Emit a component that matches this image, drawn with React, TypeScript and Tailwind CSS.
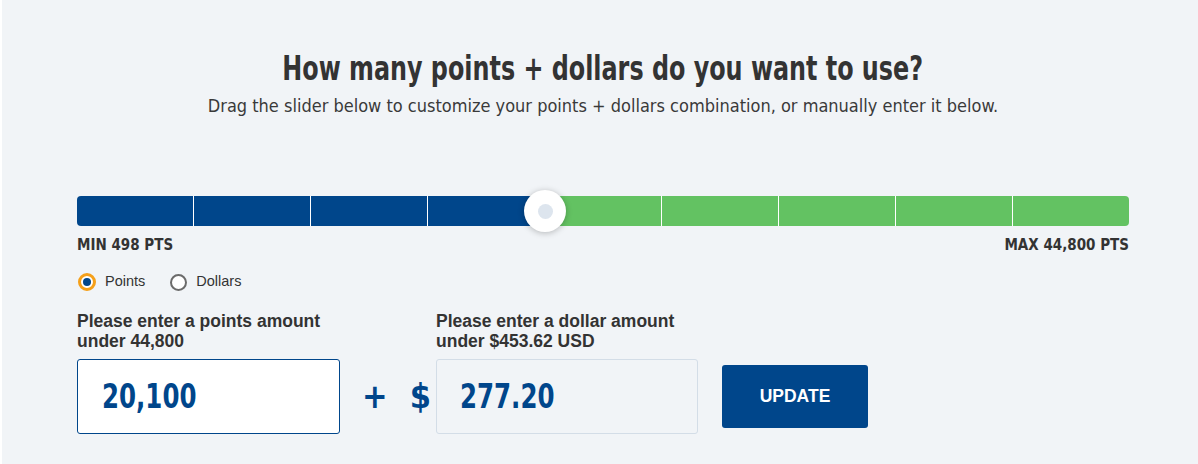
import React from "react";

const cond = { fontFamily: '"DejaVu Sans Condensed", "Roboto", "Liberation Sans", sans-serif' };

export default function App() {
  const segs = Array.from({ length: 9 });
  return (
    <div className="w-full min-h-[464px] bg-[#f1f4f7] border-l-2 border-white">
      <div className="w-[1052px] ml-[75px] pt-[48px]">
        <div className="text-center">
          <h1
            className="inline-block whitespace-nowrap scale-x-[0.78] origin-center text-[34px] leading-[40px] font-bold text-[#333333]"
            style={cond}
          >
            How many points + dollars do you want to use?
          </h1>
        </div>
        <p
          className="mt-[6px] text-center text-[18px] leading-[24px] text-[#3a3a3a]"
          style={cond}
        >
          Drag the slider below to customize your points + dollars combination, or manually enter it below.
        </p>

        <div className="relative mt-[78px] h-[30px] flex">
          {segs.map((_, i) => {
            const isBlue = i < 4;
            return (
              <div
                key={i}
                className={`flex-1 h-full ${i > 0 ? "border-l border-white" : ""} ${
                  i === 0 ? "rounded-l-[4px]" : ""
                } ${i === 8 ? "rounded-r-[4px]" : ""} ${isBlue ? "bg-[#00468b]" : "bg-[#63c262]"}`}
              />
            );
          })}
          <div className="absolute left-[425px] top-0 h-full w-[46px] bg-[#00468b]" />
          <div className="absolute left-[447px] top-[-6px] w-[42px] h-[42px] rounded-full bg-white shadow-[0_1px_6px_rgba(0,0,0,0.25)] flex items-center justify-center">
            <div className="w-[15px] h-[15px] rounded-full bg-[#dde5ee]" />
          </div>
        </div>

        <div
          className="mt-[9px] flex justify-between text-[15px] leading-[20px] font-bold text-[#333333]"
          style={cond}
        >
          <span>MIN 498 PTS</span>
          <span>MAX 44,800 PTS</span>
        </div>

        <div
          className="mt-[17px] flex items-center h-[20px] text-[14.5px] text-[#333333]"
          style={{ fontFamily: '"Liberation Sans", Arial, sans-serif' }}
        >
          <div className="flex items-center ml-[1px]">
            <span className="w-[18px] h-[18px] rounded-full border-[3px] border-[#f5a01a] bg-white flex items-center justify-center">
              <span className="w-[8px] h-[8px] rounded-full bg-[#00468b]" />
            </span>
            <span className="ml-[9px]">Points</span>
          </div>
          <div className="flex items-center ml-[25px]">
            <span className="w-[17px] h-[17px] rounded-full border-[2px] border-[#6b6b6b] bg-white" />
            <span className="ml-[9px]">Dollars</span>
          </div>
        </div>

        <div className="mt-[19px] flex items-end" style={{ fontFamily: '"Liberation Sans", Arial, sans-serif' }}>
          <div className="w-[263px]">
            <div className="text-[17.5px] leading-[20px] font-bold text-[#333333]">
              Please enter a points amount
              <br />
              under 44,800
            </div>
            <div className="mt-[8px] h-[75px] bg-white border border-[#00468b] rounded-[3px] flex items-center pl-[24px]">
              <span
                className="inline-block scale-x-[0.8] origin-left text-[34px] font-bold text-[#00468b]"
                style={cond}
              >
                20,100
              </span>
            </div>
          </div>
          <div className="w-[96px] h-[75px] flex items-center text-[34px] font-bold text-[#00468b]" style={cond}>
            <span className="ml-[22px]">+</span>
            <span className="ml-[22px]">$</span>
          </div>
          <div className="w-[262px]">
            <div className="text-[17.5px] leading-[20px] font-bold text-[#333333]">
              Please enter a dollar amount
              <br />
              under $453.62 USD
            </div>
            <div className="mt-[8px] h-[75px] bg-[#f1f4f7] border border-[#d3dde7] rounded-[3px] flex items-center pl-[23px]">
              <span
                className="inline-block scale-x-[0.8] origin-left text-[34px] font-bold text-[#00468b]"
                style={cond}
              >
                277.20
              </span>
            </div>
          </div>
          <div className="ml-[24px] h-[75px] flex items-center">
            <button className="w-[146px] h-[63px] bg-[#00468b] rounded-[3px] text-white text-[17.5px] font-bold">
              UPDATE
            </button>
          </div>
        </div>
      </div>
    </div>
  );
}
